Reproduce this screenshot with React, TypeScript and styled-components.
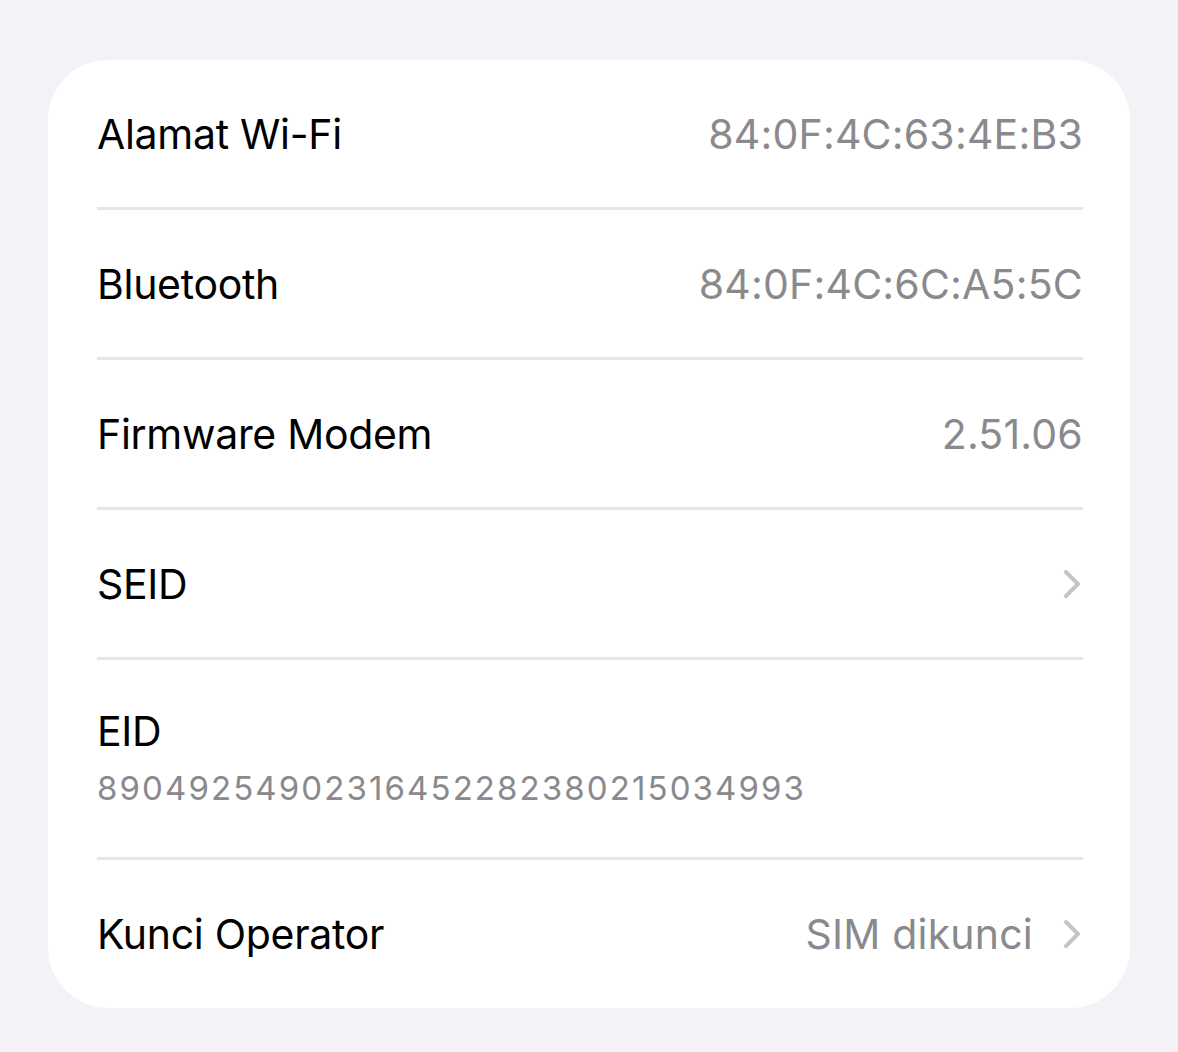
import React from "react";
import styled, { createGlobalStyle } from "styled-components";

const GlobalStyle = createGlobalStyle`
  html, body {
    margin: 0;
    padding: 0;
    background: #f2f2f7;
    font-family: Inter, "Noto Sans", sans-serif;
    -webkit-font-smoothing: antialiased;
  }
`;

const Page = styled.div`
  width: 1178px;
  height: 1052px;
  padding: 60px 48px 0 48px;
  box-sizing: border-box;
  background: #f2f2f7;
`;

const Card = styled.div`
  background: #ffffff;
  border-radius: 60px;
  padding: 0 47px 0 49px;
  display: flex;
  flex-direction: column;
`;

const Row = styled.div<{ $last?: boolean; $tall?: boolean }>`
  box-sizing: border-box;
  min-height: ${(p) => (p.$tall ? 200 : p.$last ? 148 : 150)}px;
  display: flex;
  align-items: center;
  justify-content: space-between;
  border-bottom: ${(p) => (p.$last ? "none" : "3px solid #e5e5ea")};
`;

const Label = styled.span`
  font-size: 41px;
  color: #000000;
  letter-spacing: -0.3px;
`;

const Value = styled.span`
  font-size: 41px;
  color: #8a8a8e;
  letter-spacing: 0.2px;
`;

const Trailing = styled.div`
  display: flex;
  align-items: center;
  gap: 30px;
`;

const Stack = styled.div`
  display: flex;
  flex-direction: column;
  gap: 12px;
  margin-top: -4px;
`;

const SubValue = styled.span`
  font-size: 33px;
  color: #8a8a8e;
  letter-spacing: 2.1px;
`;

const Chevron = () => (
  <svg width="18" height="30" viewBox="0 0 18 30" style={{ marginRight: 2 }}>
    <path
      d="M3 3 L15 15 L3 27"
      fill="none"
      stroke="#c4c4c7"
      strokeWidth="4"
      strokeLinecap="round"
      strokeLinejoin="round"
    />
  </svg>
);

export default function App() {
  return (
    <Page>
      <GlobalStyle />
      <Card>
        <Row>
          <Label>Alamat Wi-Fi</Label>
          <Value>84:0F:4C:63:4E:B3</Value>
        </Row>
        <Row>
          <Label>Bluetooth</Label>
          <Value>84:0F:4C:6C:A5:5C</Value>
        </Row>
        <Row>
          <Label>Firmware Modem</Label>
          <Value>2.51.06</Value>
        </Row>
        <Row>
          <Label>SEID</Label>
          <Chevron />
        </Row>
        <Row $tall>
          <Stack>
            <Label>EID</Label>
            <SubValue>89049254902316452282380215034993</SubValue>
          </Stack>
        </Row>
        <Row $last>
          <Label>Kunci Operator</Label>
          <Trailing>
            <Value>SIM dikunci</Value>
            <Chevron />
          </Trailing>
        </Row>
      </Card>
    </Page>
  );
}
